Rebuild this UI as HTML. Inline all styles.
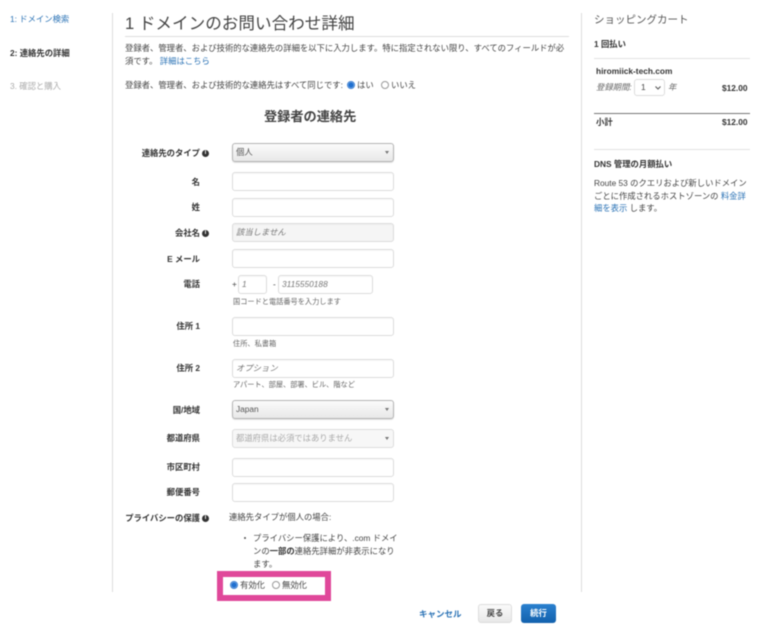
<!DOCTYPE html>
<html lang="ja">
<head>
<meta charset="utf-8">
<style>
html,body{margin:0;padding:0;background:#fff}
body{width:760px;height:630px;overflow:hidden;position:relative}
#p{position:absolute;left:0;top:0;width:760px;height:630px;filter:blur(.45px);font-family:"Liberation Sans","Noto Sans CJK JP",sans-serif;color:#444;font-size:8.33px}
#p div{position:absolute;white-space:nowrap;box-sizing:border-box}
.t{line-height:14px;height:14px}
.b{font-weight:bold;color:#333}
.l{font-weight:bold;color:#333;text-align:right;line-height:14px;height:14px}
a{color:#2a72b5;text-decoration:none}
.in{background:#fff;border:1px solid #dcdcdc;border-radius:3px;left:232px;width:162px;height:19px;box-shadow:inset 0 1px 1px rgba(0,0,0,.03)}
.ph{font-style:italic;color:#777;line-height:17px;padding-left:3px}
.sel{left:232px;width:162px;height:19px;border:1px solid #b4b4b4;border-radius:3px;background:linear-gradient(#fbfbfb,#e8e8e8);line-height:17px;padding-left:3px;color:#555;box-shadow:0 1px 1px rgba(0,0,0,.12)}
.sel:after{content:"";position:absolute;right:4px;top:7px;border-left:2.5px solid transparent;border-right:2.5px solid transparent;border-top:3px solid #777}
.h{font-size:7.2px;color:#666;left:233px;line-height:12px;height:12px}
.i{display:inline-block;width:7px;height:7px;border-radius:50%;background:#333;color:#fff;font-size:6px;line-height:7px;text-align:center;font-weight:bold;font-style:normal;position:relative;top:-2.5px;margin-left:2px}
.r{width:8px;height:8px;border-radius:50%;border:1px solid #999;background:#fff}
.r.on{border:1px solid #3d7fd0;background:radial-gradient(circle,#1f6fd0 0,#1f6fd0 2.4px,#cfe2f7 3px)}
</style>
</head>
<body>
<div id="p">
<div class="t" style="left:10px;top:12px;color:#2a72b5">1: ドメイン検索</div>
<div class="t b" style="left:10px;top:46px">2: 連絡先の詳細</div>
<div class="t" style="left:10px;top:79px;color:#aaa">3. 確認と購入</div>

<div style="left:112px;top:13px;width:1px;height:579px;background:#ddd"></div>
<div style="left:581px;top:13px;width:1px;height:579px;background:#ddd"></div>

<div style="left:125px;top:12px;font-size:16.6px;line-height:24px;color:#444">1 ドメインのお問い合わせ詳細</div>
<div style="left:125px;top:36px;width:444px;height:1px;background:#ddd"></div>
<div class="t" style="left:125px;top:41px">登録者、管理者、および技術的な連絡先の詳細を以下に入力します。特に指定されない限り、すべてのフィールドが必</div>
<div class="t" style="left:125px;top:54px">須です。 <a href="#">詳細はこちら</a></div>
<div class="t" style="left:125px;top:78px">登録者、管理者、および技術的な連絡先はすべて同じです:</div>
<div class="r on" style="left:347px;top:81px"></div>
<div class="t" style="left:357px;top:78px">はい</div>
<div class="r" style="left:381px;top:81px"></div>
<div class="t" style="left:391px;top:78px">いいえ</div>
<div class="b" style="left:264px;top:108px;font-size:13.2px;line-height:18px;color:#444">登録者の連絡先</div>

<div class="l" style="left:110px;width:99px;top:146px">連絡先のタイプ<span class="i">i</span></div>
<div class="sel" style="top:143px">個人</div>

<div class="l" style="left:110px;width:90px;top:175px">名</div>
<div class="in" style="top:172px"></div>
<div class="l" style="left:110px;width:90px;top:200px">姓</div>
<div class="in" style="top:198px"></div>
<div class="l" style="left:110px;width:99px;top:226px">会社名<span class="i">i</span></div>
<div class="in ph" style="top:223px;background:#f5f5f5">該当しません</div>
<div class="l" style="left:110px;width:90px;top:252px">E メール</div>
<div class="in" style="top:249px"></div>

<div class="l" style="left:110px;width:90px;top:277px">電話</div>
<div class="t" style="left:232px;top:277px">+</div>
<div class="in ph" style="left:238px;width:29px;top:275px">1</div>
<div class="t" style="left:273px;top:277px">-</div>
<div class="in ph" style="left:278px;width:95px;top:275px">3115550188</div>
<div class="h" style="top:296px">国コードと電話番号を入力します</div>

<div class="l" style="left:110px;width:90px;top:319px">住所 1</div>
<div class="in" style="top:317px"></div>
<div class="h" style="top:338px">住所、私書箱</div>

<div class="l" style="left:110px;width:90px;top:361px">住所 2</div>
<div class="in ph" style="top:359px">オプション</div>
<div class="h" style="top:379px">アパート、部屋、部署、ビル、階など</div>

<div class="l" style="left:110px;width:90px;top:403px">国/地域</div>
<div class="sel" style="top:400px">Japan</div>

<div class="l" style="left:110px;width:90px;top:431px">都道府県</div>
<div class="sel" style="top:429px;border-color:#ddd;color:#aaa;background:#f7f7f7;box-shadow:none">都道府県は必須ではありません</div>

<div class="l" style="left:110px;width:90px;top:460px">市区町村</div>
<div class="in" style="top:458px"></div>
<div class="l" style="left:110px;width:90px;top:485px">郵便番号</div>
<div class="in" style="top:483px"></div>

<div class="l" style="left:110px;width:99px;top:511px">プライバシーの保護<span class="i">i</span></div>
<div class="t" style="left:229px;top:510px">連絡先タイプが個人の場合:</div>
<div style="left:244px;top:537px;width:2px;height:2px;border-radius:50%;background:#555"></div>
<div class="t" style="left:253px;top:531px">プライバシー保護により、.com ドメイ</div>
<div class="t" style="left:253px;top:544px">ンの<b style="color:#333">一部の</b>連絡先詳細が非表示になり</div>
<div class="t" style="left:253px;top:557px">ます。</div>

<div style="left:217px;top:571px;width:114px;height:30px;border:6px solid #e0489a;background:#fff"></div>
<div class="r on" style="left:230px;top:581px"></div>
<div class="t" style="left:240px;top:578px">有効化</div>
<div class="r" style="left:272px;top:581px"></div>
<div class="t" style="left:282px;top:578px">無効化</div>

<div class="t" style="left:419px;top:607px;font-size:8.5px;font-weight:bold;color:#2a72b5">キャンセル</div>
<div style="left:478px;top:604px;width:34px;height:19px;border:1px solid #ddd;border-radius:3px;background:linear-gradient(#fafafa,#e8e8e8);text-align:center;line-height:17px;font-weight:bold;color:#444">戻る</div>
<div style="left:521px;top:604px;width:35px;height:19px;border-radius:3px;background:linear-gradient(#2a80cf,#1261ad);text-align:center;line-height:19px;font-weight:bold;color:#fff">続行</div>

<div style="left:594px;top:12px;font-size:10.5px;line-height:16px;color:#555">ショッピングカート</div>
<div class="t b" style="left:594px;top:37px">1 回払い</div>
<div style="left:594px;top:58px;width:156px;height:1px;background:#e2e2e2"></div>
<div class="t b" style="left:596px;top:64px">hiromiick-tech.com</div>
<div class="t" style="left:596px;top:80px;font-style:italic;color:#666">登録期間:</div>
<div style="left:634px;top:79px;width:31px;height:17px;border:1px solid #ddd;border-radius:3px;background:#fff;line-height:15px;padding-left:6px;color:#444">1
<svg style="position:absolute;right:3px;top:6px" width="6" height="4" viewBox="0 0 6 4"><path d="M.5.5 3 3 5.500.5" fill="none" stroke="#555" stroke-width="1"/></svg></div>
<div class="t" style="left:668px;top:80px;font-style:italic;color:#666">年</div>
<div class="t b" style="left:722px;top:81px">$12.00</div>
<div style="left:594px;top:113px;width:156px;height:1px;background:#777"></div>
<div class="t b" style="left:596px;top:115px">小計</div>
<div class="t b" style="left:722px;top:115px">$12.00</div>
<div style="left:594px;top:149px;width:156px;height:1px;background:#e2e2e2"></div>
<div class="t b" style="left:594px;top:157px">DNS 管理の月額払い</div>
<div class="t" style="left:594px;top:176px">Route 53 のクエリおよび新しいドメイン</div>
<div class="t" style="left:594px;top:189px">ごとに作成されるホストゾーンの <a href="#">料金詳</a></div>
<div class="t" style="left:594px;top:201px"><a href="#">細を表示</a> します。</div>
</div>
</body>
</html>
